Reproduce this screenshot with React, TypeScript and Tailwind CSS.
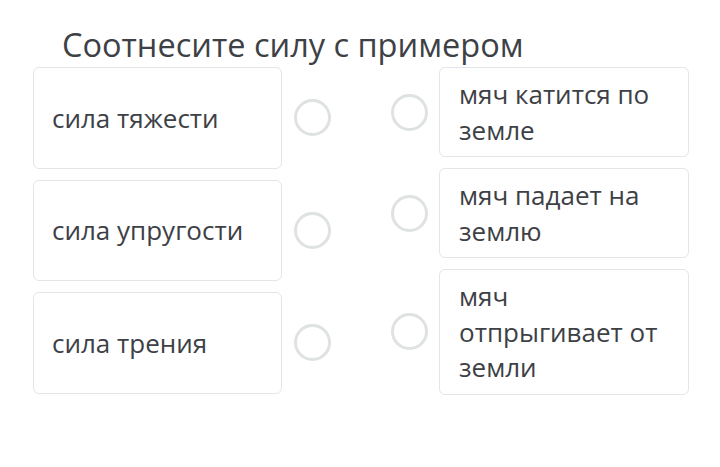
const forces = ["сила тяжести", "сила упругости", "сила трения"];
const examples = ["мяч катится по земле", "мяч падает на землю", "мяч отпрыгивает от земли"];

const Circle: React.FC = () => (
  <div className="w-[37px] h-[37px] shrink-0 rounded-full border-[3px] border-[#dfe2e3]"></div>
);

const App: React.FC = () => {
  return (
    <div
      className="w-[720px] h-[467px] bg-white text-[#3d4146] overflow-hidden"
      style={{ fontFamily: '"Open Sans", sans-serif' }}
    >
      <h1 className="pl-[62px] pt-[26px] text-[32.5px] leading-[38px] font-normal">
        Соотнесите силу с примером
      </h1>
      <div className="flex mt-[3px] ml-[33px] gap-[60px] items-start">
        <div className="flex flex-col gap-[11px]">
          {forces.map((f) => (
            <div key={f} className="flex items-center gap-[12px]">
              <div className="w-[249px] h-[101.5px] flex items-center px-[18px] border border-[#e3e5e8] rounded-md text-[26px] leading-[36px]">
                {f}
              </div>
              <Circle />
            </div>
          ))}
        </div>
        <div className="flex flex-col gap-[11px]">
          {examples.map((e) => (
            <div key={e} className="flex items-center gap-[11px]">
              <Circle />
              <div className="w-[250px] pl-[19px] pr-[19px] pt-[9px] pb-[8px] border border-[#e3e5e8] rounded-md text-[26px] leading-[35.5px]">
                {e}
              </div>
            </div>
          ))}
        </div>
      </div>
    </div>
  );
};

export default App;
